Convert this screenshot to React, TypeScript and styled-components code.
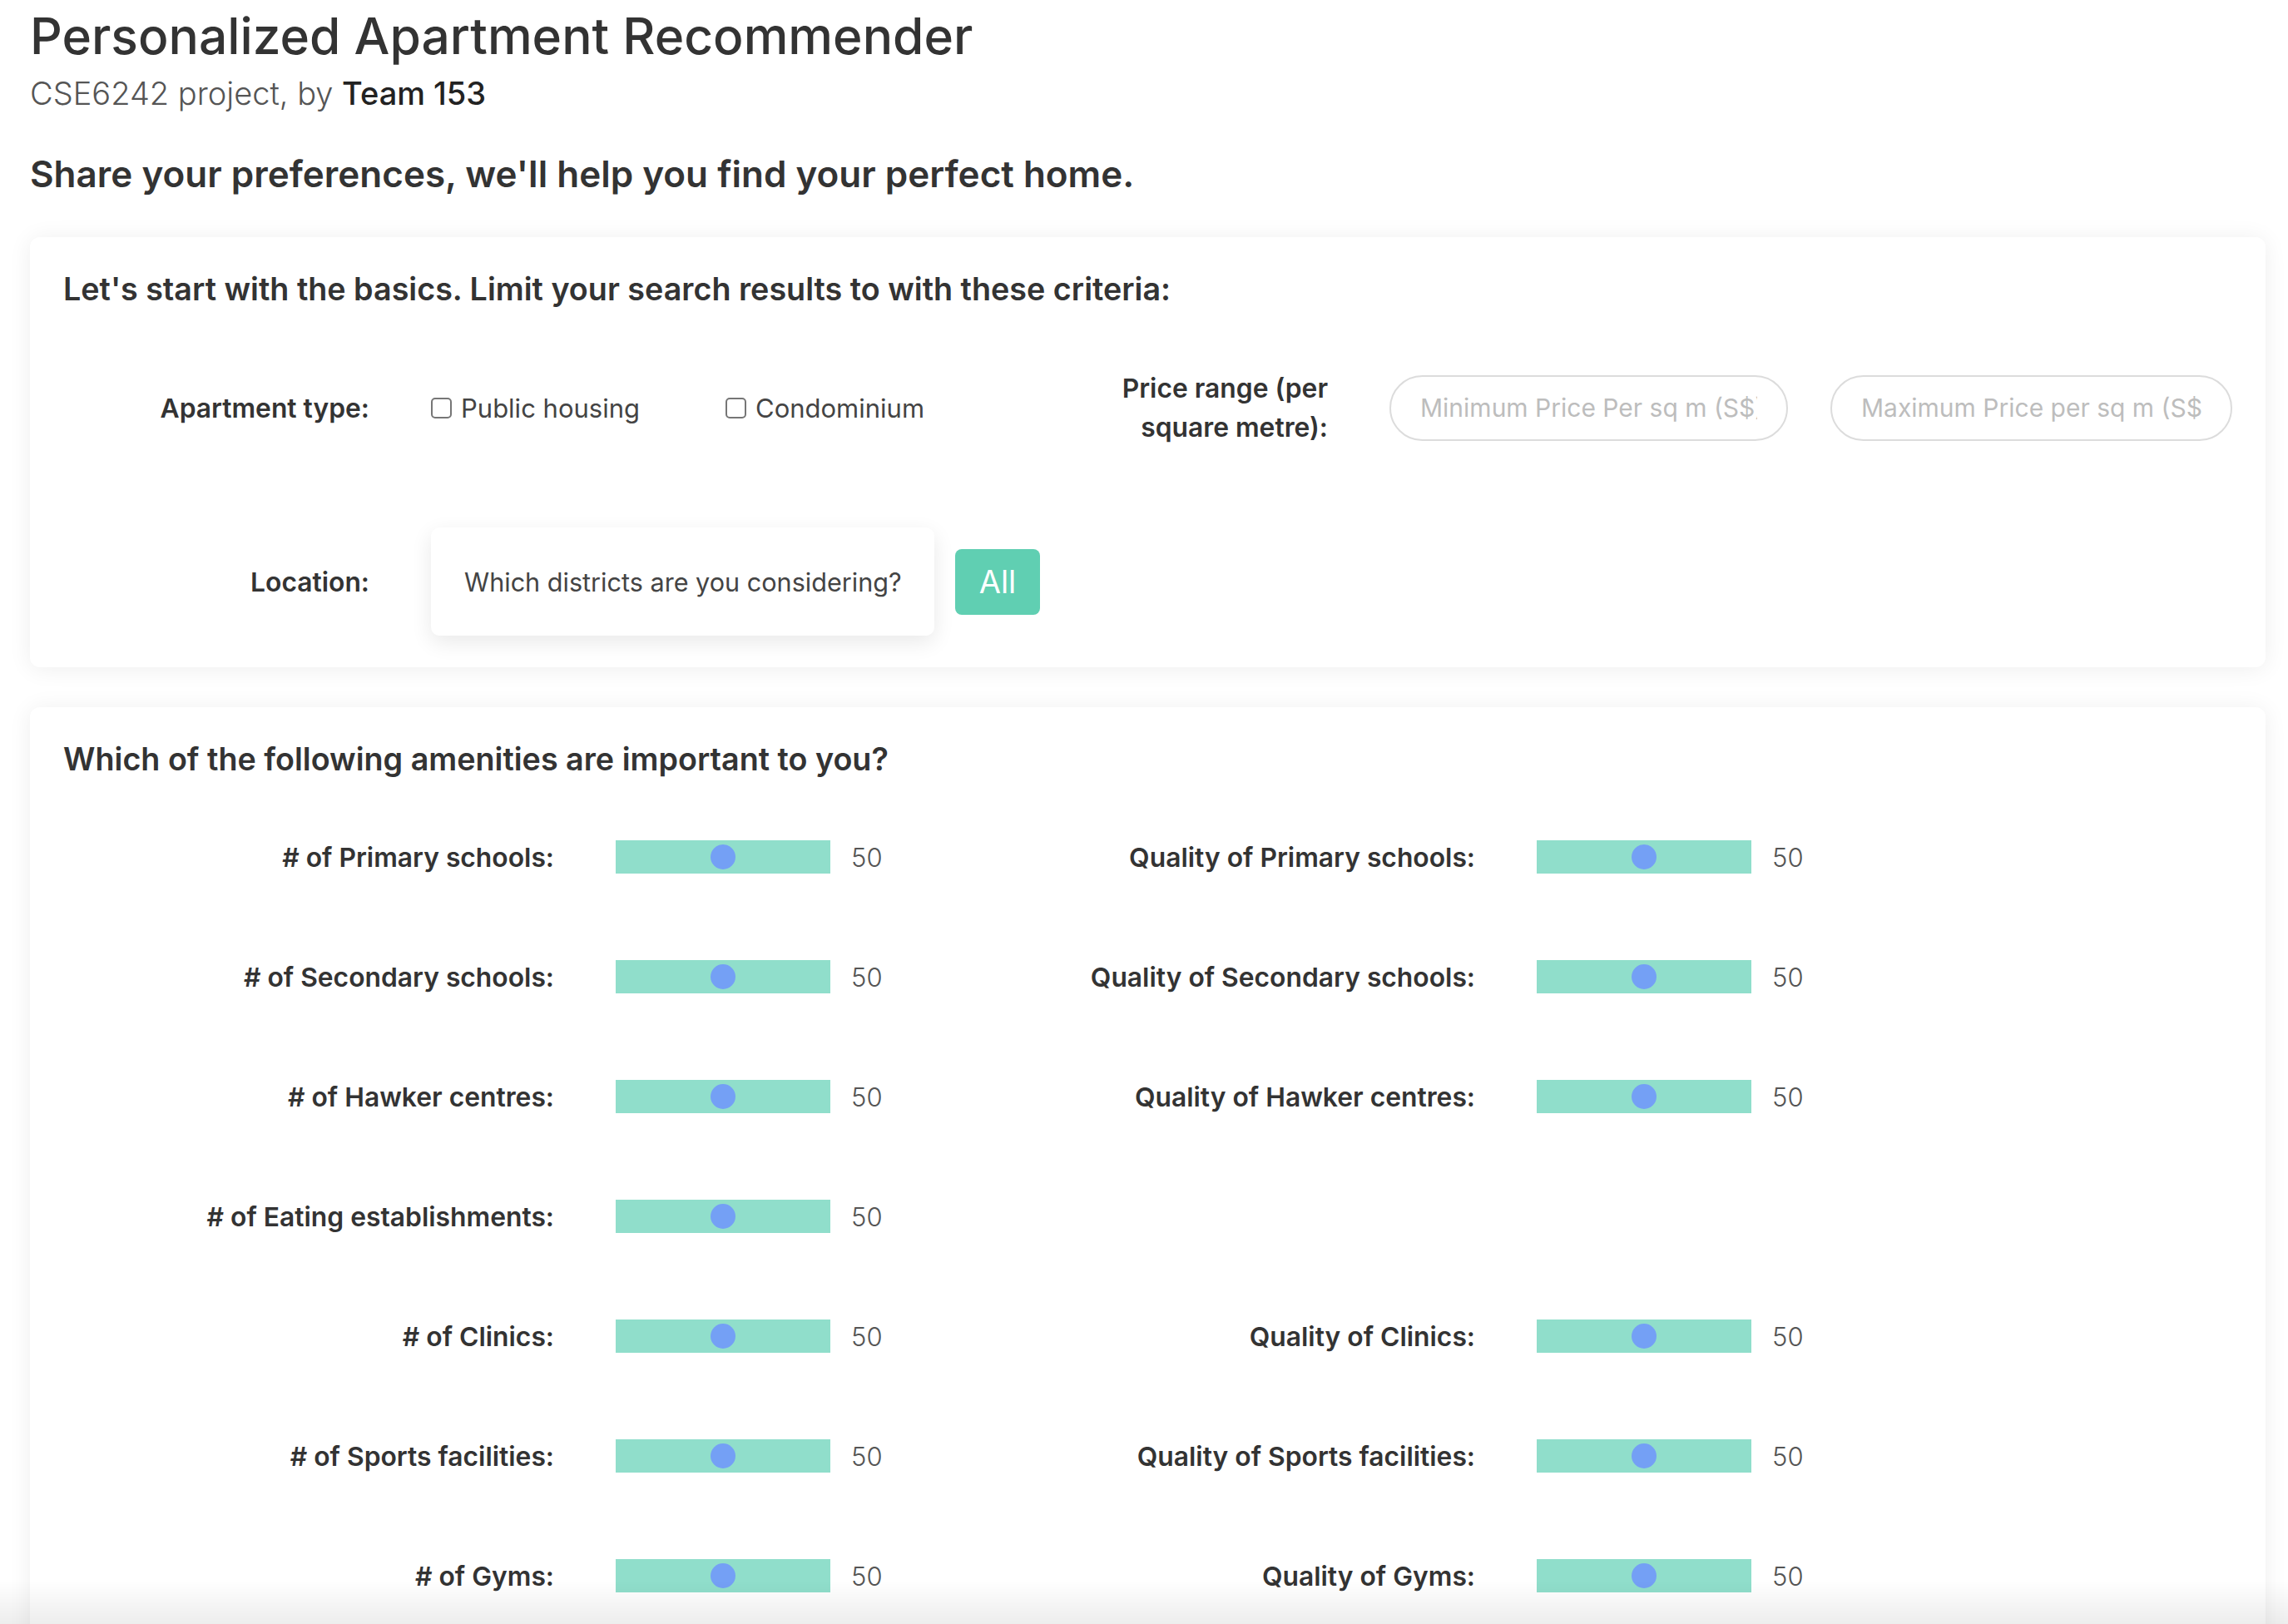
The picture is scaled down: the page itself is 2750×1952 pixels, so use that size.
import React from "react";
import styled, { createGlobalStyle } from "styled-components";

const GlobalStyle = createGlobalStyle`
  html, body { margin: 0; padding: 0; background: #fff; }
  body {
    font-family: Inter, "Noto Sans", sans-serif;
    color: #333;
    -webkit-font-smoothing: antialiased;
  }
  * { box-sizing: border-box; }
`;

const Page = styled.div`
  padding: 7px 27px 0 36px;
`;

const Title = styled.h1`
  margin: 0;
  font-size: 60.5px;
  font-weight: 500;
  line-height: 1.2;
  color: #333;
`;

const Subtitle = styled.p`
  margin: 10px 0 0;
  font-size: 38px;
  font-weight: 300;
  line-height: 1.2;
  color: #555;
  b { font-weight: 500; color: #222; }
`;

const Tagline = styled.h2`
  margin: 48px 0 0;
  font-size: 44px;
  font-weight: 600;
  line-height: 1.2;
  color: #333;
`;

const Card = styled.section<{ $mt: number; $pb: number }>`
  margin-top: ${(p) => p.$mt}px;
  background: #fff;
  border-radius: 12px;
  box-shadow: 0 2px 28px rgba(0, 0, 0, 0.07);
  padding: 40px 40px ${(p) => p.$pb}px;
`;

const CardHeading = styled.h3`
  margin: 0;
  font-size: 37.7px;
  font-weight: 600;
  line-height: 1.2;
  color: #333;
`;

const FormRow = styled.div<{ $h: number; $mt: number }>`
  display: flex;
  align-items: center;
  height: ${(p) => p.$h}px;
  margin-top: ${(p) => p.$mt}px;
`;

const FieldLabel = styled.label<{ $w: number }>`
  flex: 0 0 ${(p) => p.$w}px;
  width: ${(p) => p.$w}px;
  margin-right: 74px;
  text-align: right;
  font-size: 31.8px;
  font-weight: 600;
  line-height: 47px;
  color: #333;
`;

const CheckOption = styled.label<{ $w?: number }>`
  display: flex;
  align-items: center;
  gap: 11px;
  font-size: 31px;
  color: #444;
  ${(p) => (p.$w ? `flex: 0 0 ${p.$w}px;` : "flex: 1 1 auto;")}
`;

const CheckBox = styled.input.attrs({ type: "checkbox" })`
  appearance: none;
  -webkit-appearance: none;
  margin: 0;
  width: 25px;
  height: 25px;
  border: 2px solid #767676;
  border-radius: 5px;
  background: #fff;
`;

const PriceInput = styled.input<{ $w: number; $ml?: number }>`
  flex: 0 0 ${(p) => p.$w}px;
  width: ${(p) => p.$w}px;
  height: 79px;
  margin-left: ${(p) => p.$ml ?? 0}px;
  border: 2px solid #dcdcdc;
  border-radius: 40px;
  padding: 0 35px;
  font-family: inherit;
  font-size: 30px;
  color: #333;
  outline: none;
  &::placeholder { color: #bdbdbd; }
`;

const DistrictSelect = styled.div`
  width: 605px;
  height: 130px;
  background: #fff;
  border-radius: 10px;
  box-shadow: 0 8px 26px rgba(0, 0, 0, 0.09);
  display: flex;
  align-items: center;
  padding-left: 40px;
  font-size: 30.6px;
  color: #444;
`;

const AllButton = styled.button`
  margin-left: 25px;
  width: 102px;
  height: 79px;
  background: #60cfb2;
  border: none;
  border-radius: 8px;
  color: #fff;
  font-family: inherit;
  font-size: 38px;
  font-weight: 400;
`;

const SliderGrid = styled.div`
  display: grid;
  grid-template-columns: 1107px 1107px;
  grid-auto-rows: 144px;
  margin-top: 23px;
`;

const SliderGroup = styled.div`
  display: grid;
  grid-template-columns: 664px 258px 1fr;
  align-items: center;
`;

const SliderLabel = styled.label`
  padding-right: 74px;
  text-align: right;
  font-size: 31.8px;
  font-weight: 600;
  color: #333;
`;

const Range = styled.input.attrs({ type: "range", min: 0, max: 100 })`
  -webkit-appearance: none;
  appearance: none;
  width: 258px;
  height: 40px;
  margin: 0;
  background: #90decb;
  outline: none;
  border-radius: 0;
  &::-webkit-slider-thumb {
    -webkit-appearance: none;
    width: 30px;
    height: 30px;
    border-radius: 50%;
    background: #74a0f5;
    border: none;
  }
  &::-moz-range-thumb {
    width: 30px;
    height: 30px;
    border-radius: 50%;
    background: #74a0f5;
    border: none;
  }
`;

const Value = styled.span`
  padding-left: 25px;
  font-size: 31px;
  font-weight: 300;
  color: #555;
`;

const BottomFade = styled.div`
  position: fixed;
  left: 0;
  right: 0;
  bottom: 0;
  height: 52px;
  pointer-events: none;
  background: linear-gradient(to bottom, rgba(0, 0, 0, 0), rgba(0, 0, 0, 0.07));
`;

const rows: [string, string | null][] = [
  ["# of Primary schools:", "Quality of Primary schools:"],
  ["# of Secondary schools:", "Quality of Secondary schools:"],
  ["# of Hawker centres:", "Quality of Hawker centres:"],
  ["# of Eating establishments:", null],
  ["# of Clinics:", "Quality of Clinics:"],
  ["# of Sports facilities:", "Quality of Sports facilities:"],
  ["# of Gyms:", "Quality of Gyms:"],
];

function Slider({ label }: { label: string }) {
  return (
    <SliderGroup>
      <SliderLabel>{label}</SliderLabel>
      <Range defaultValue={50} />
      <Value>50</Value>
    </SliderGroup>
  );
}

export default function App() {
  return (
    <>
      <GlobalStyle />
      <Page>
        <Title>Personalized Apartment Recommender</Title>
        <Subtitle>
          CSE6242 project, by <b>Team 153</b>
        </Subtitle>
        <Tagline>Share your preferences, we'll help you find your perfect home.</Tagline>

        <Card $mt={49} $pb={38}>
          <CardHeading>
            Let's start with the basics. Limit your search results to with these criteria:
          </CardHeading>
          <FormRow $h={160} $mt={40}>
            <FieldLabel $w={368}>Apartment type:</FieldLabel>
            <CheckOption $w={354}>
              <CheckBox />
              Public housing
            </CheckOption>
            <CheckOption>
              <CheckBox />
              Condominium
            </CheckOption>
            <FieldLabel $w={300}>Price range (per square metre):</FieldLabel>
            <PriceInput $w={479} placeholder="Minimum Price Per sq m (S$)" />
            <PriceInput $w={483} $ml={51} placeholder="Maximum Price per sq m (S$)" />
          </FormRow>
          <FormRow $h={130} $mt={64}>
            <FieldLabel $w={368}>Location:</FieldLabel>
            <DistrictSelect>Which districts are you considering?</DistrictSelect>
            <AllButton>All</AllButton>
          </FormRow>
        </Card>

        <Card $mt={48} $pb={40}>
          <CardHeading>Which of the following amenities are important to you?</CardHeading>
          <SliderGrid>
            {rows.map(([a, b]) => (
              <React.Fragment key={a}>
                <Slider label={a} />
                {b ? <Slider label={b} /> : <div />}
              </React.Fragment>
            ))}
          </SliderGrid>
        </Card>
      </Page>
      <BottomFade />
    </>
  );
}
